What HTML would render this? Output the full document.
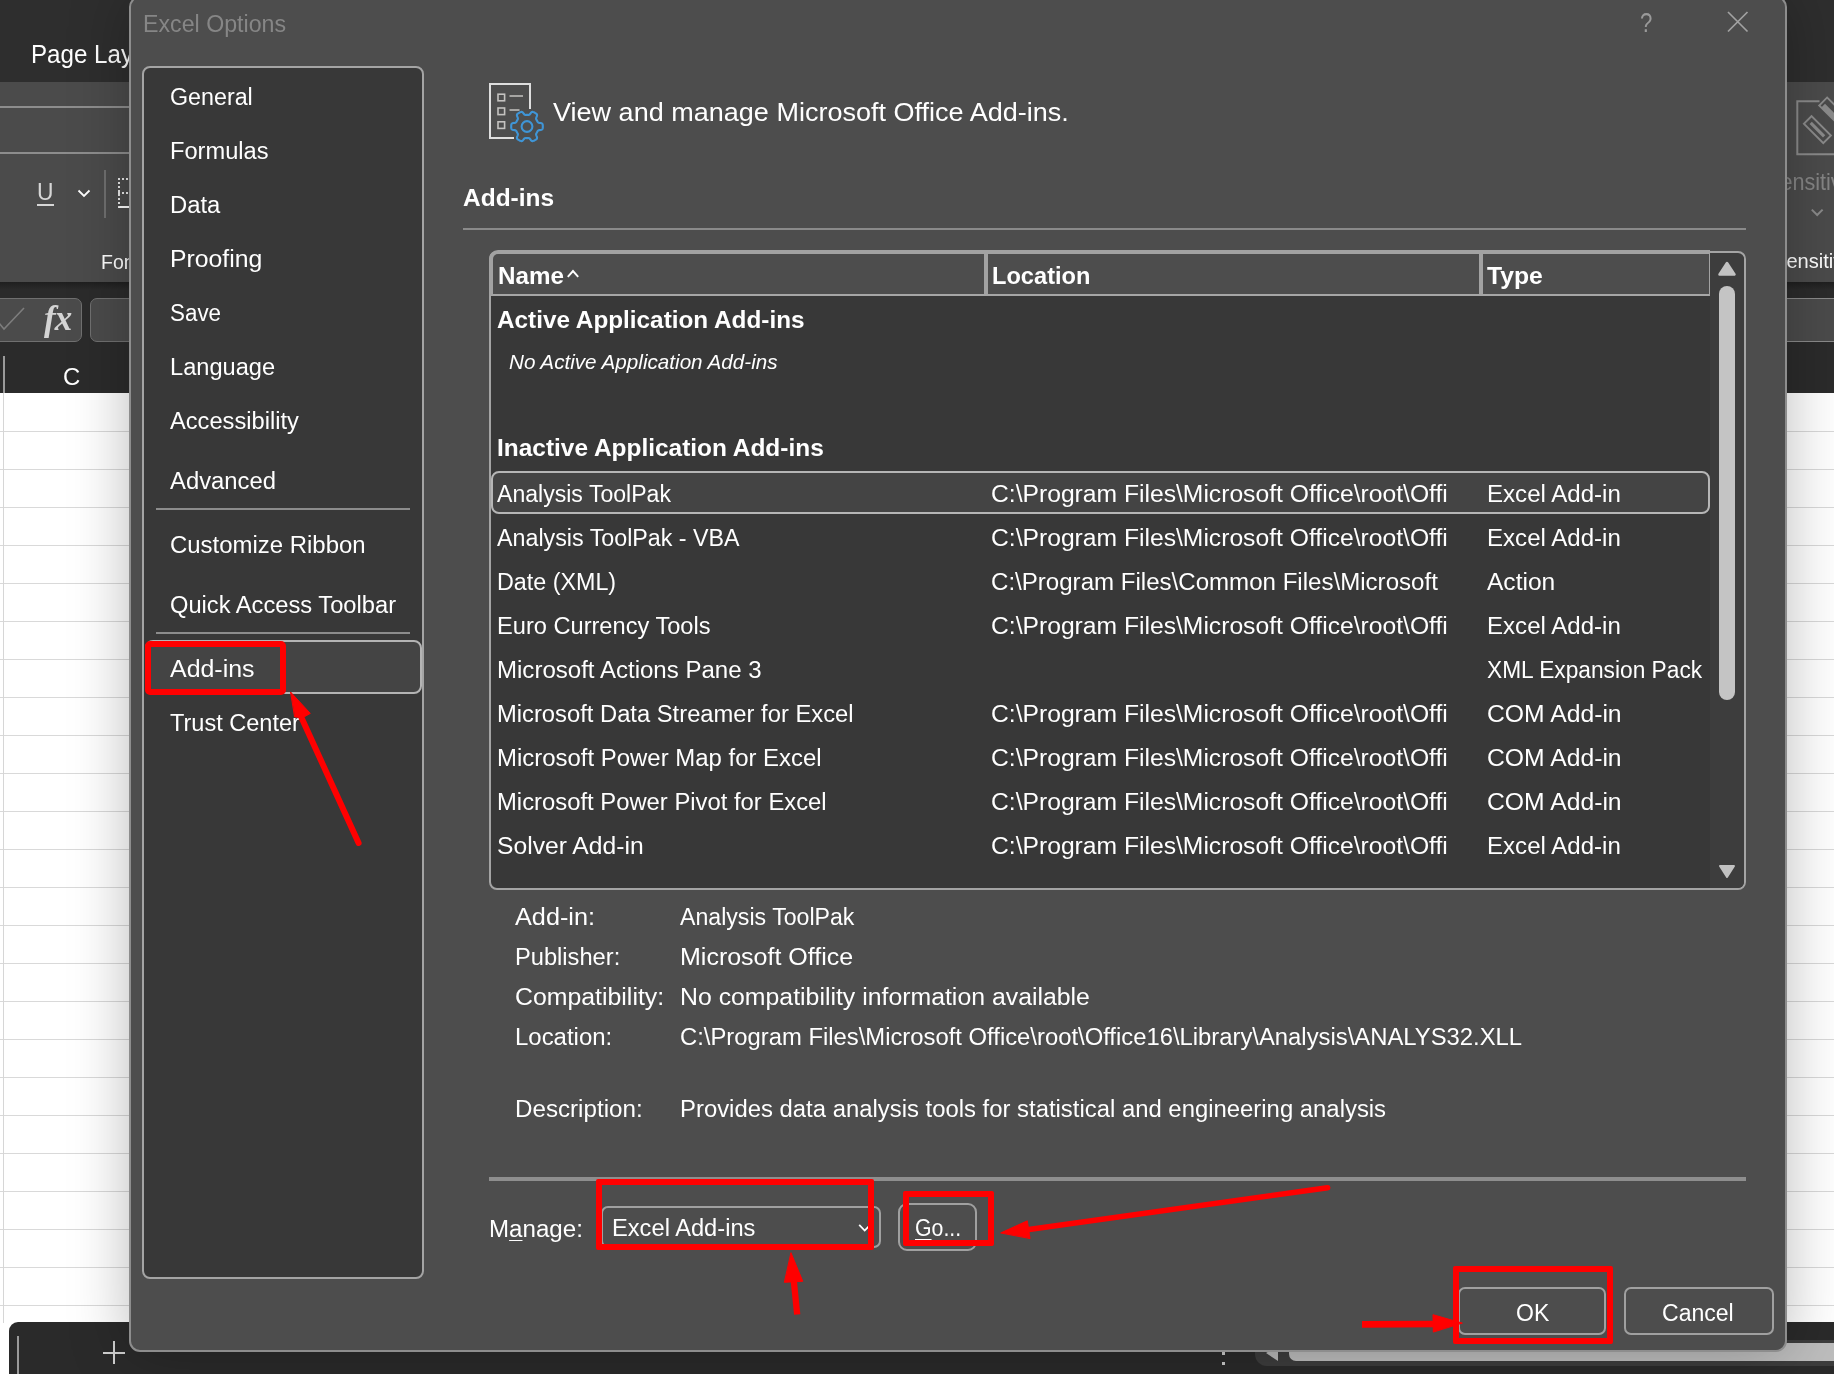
<!DOCTYPE html>
<html><head><meta charset="utf-8"><title>Excel Options</title>
<style>
html,body{margin:0;padding:0}
body{width:1834px;height:1374px;overflow:hidden;position:relative;background:#fff;font-family:"Liberation Sans",sans-serif}
div,svg{position:absolute;box-sizing:border-box}
.t{white-space:nowrap;transform-origin:0 50%}
.t u{text-decoration-thickness:1.4px;text-underline-offset:3.2px}
#bg,#dlgwrap{left:0;top:0;width:1834px;height:1374px;overflow:hidden}
#bg,#dlgwrap{will-change:transform}
.btn{border:2px solid #a0a0a0;border-radius:7px;background:#4d4d4d}
.red{border:6px solid #f00;border-radius:2px}
</style></head><body>
<!-- ================= Excel background ================= -->
<div id="bg">
  <div style="left:0;top:0;width:1834px;height:82px;background:#2e2e2e"></div>
  <div style="left:0;top:82px;width:1834px;height:200px;background:#4b4b4b"></div>
  <div style="left:0;top:106px;width:140px;height:2px;background:#8d8d8d"></div>
  <div style="left:0;top:152px;width:140px;height:2px;background:#8d8d8d"></div>
  <div style="left:0;top:282px;width:1834px;height:111px;background:#2b2b2b"></div>
  <div style="left:0;top:282px;width:1834px;height:8px;background:linear-gradient(#1f1f1f,#2b2b2b)"></div>
  <!-- left ribbon bits -->
  <div style="left:37px;top:204px;width:17px;height:2px;background:#d6d6d6"></div>
  <div class="t" style="left:36.5px;top:179.5px;font:24px/1 'Liberation Sans',sans-serif;color:#d6d6d6;transform:scaleX(.95)">U</div>
  <svg style="left:76px;top:186px" width="16" height="14" viewBox="0 0 16 14"><path d="M2.5 4.5 L8 10 L13.5 4.5" fill="none" stroke="#fff" stroke-width="1.8"/></svg>
  <div style="left:104px;top:170px;width:2px;height:48px;background:#707070"></div>
  <div style="left:118px;top:178px;width:30px;height:30px;border:2px dotted #e8e8e8;border-bottom:2px solid #fff"></div>
  <div style="left:118px;top:192px;width:30px;height:2px;border-top:2px dotted #e8e8e8"></div>
  <!-- formula bar left -->
  <div style="left:-20px;top:298px;width:102px;height:44px;background:#4b4b4b;border:1px solid #707070;border-radius:7px"></div>
  <div style="left:90px;top:298px;width:80px;height:44px;background:#4b4b4b;border:1px solid #707070;border-radius:7px"></div>
  <svg style="left:0;top:304px" width="30" height="30" viewBox="0 0 30 30"><path d="M-2 18 L4 25 L24 4" fill="none" stroke="#7d7d7d" stroke-width="1.6"/></svg>
  <div class="t" style="left:44px;top:300.500px;font:italic 700 35px/1 'Liberation Serif',serif;color:#d4d4d4;letter-spacing:-1px">fx</div>
  <!-- formula bar right -->
  <div style="left:1780px;top:298px;width:60px;height:44px;background:#4b4b4b;border-top:1px solid #8a8a8a;border-bottom:1px solid #8a8a8a"></div>
  <!-- column header separator -->
  <div style="left:3px;top:356px;width:1.5px;height:37px;background:#9a9a9a"></div>
  <!-- sheet -->
  <div style="left:0;top:393px;width:1834px;height:930px;background:#fff"></div>
  <div style="left:0;top:394px;width:1834px;height:929px;background:repeating-linear-gradient(to bottom,transparent 0,transparent 37px,#d9d9d9 37px,#d9d9d9 38px)"></div>
  <div style="left:3px;top:393px;width:1px;height:930px;background:#d6d6d6"></div>
  <!-- bottom bar -->
  <div style="left:9px;top:1322px;width:1900px;height:60px;background:#2a2a2a;border-top-left-radius:9px"></div>
  <div style="left:17px;top:1336px;width:2px;height:40px;background:#9a9a9a"></div>
  <div style="left:103px;top:1351.5px;width:22px;height:2px;background:#d0d0d0"></div>
  <div style="left:113px;top:1341px;width:2px;height:23px;background:#d0d0d0"></div>
  <div style="left:1221.5px;top:1352px;width:3px;height:3px;background:#c8c8c8"></div>
  <div style="left:1221.5px;top:1362px;width:3px;height:3px;background:#c8c8c8"></div>
  <div style="left:1255px;top:1340px;width:600px;height:26px;background:#3d3d3d;border-top-left-radius:12px;border-bottom-left-radius:12px"></div>
  <svg style="left:1262px;top:1344px" width="18" height="18" viewBox="0 0 18 18"><path d="M16 2 L4 9 L16 17 Z" fill="#b9b9b9"/></svg>
  <div style="left:1289px;top:1343px;width:600px;height:18px;background:#bdbdbd;border-radius:7px"></div>
  <!-- right ribbon: sensitivity icon -->
  <svg style="left:1786px;top:90px" width="48" height="135" viewBox="1786 90 48 135">
    <path d="M1819.5 101.3 H1797.3 V154.3 H1840" fill="none" stroke="#8b8b8b" stroke-width="2"/>
    <g transform="translate(1817.4,129.6) rotate(45)"><rect x="-13.7" y="-5.400" width="27.4" height="10.800" fill="none" stroke="#8b8b8b" stroke-width="1.9"/><rect x="-9.5" y="-1.6" width="19" height="3.2" fill="#8b8b8b"/></g>
    <g transform="translate(1819.2,105.4) rotate(45)"><rect x="0" y="-11.2" width="40" height="11.200" fill="#4b4b4b" stroke="#8b8b8b" stroke-width="1.9"/><rect x="3" y="-5.200" width="37" height="5.200" fill="#8b8b8b"/></g>
    <path d="M1811.8 209.6 L1817.2 215 L1822.6 209.6" fill="none" stroke="#8a8a8a" stroke-width="2"/>
  </svg>
<div class="t" style="left:31.4px;top:42.1px;font:normal 400 25px/1 'Liberation Sans', sans-serif;color:#fff;transform:scaleX(0.9650)">Page Layout</div>
<div class="t" style="left:101.3px;top:251.0px;font:normal 400 21px/1 'Liberation Sans', sans-serif;color:#fff;transform:scaleX(0.9300)">Font</div>
<div class="t" style="left:63.2px;top:365.3px;font:normal 400 24px/1 'Liberation Sans', sans-serif;color:#fff;transform:scaleX(0.9963)">C</div>
<div class="t" style="left:1766.0px;top:170.1px;font:normal 400 24px/1 'Liberation Sans', sans-serif;color:#858585;transform:scaleX(0.9000)">Sensitivity</div>
<div class="t" style="left:1772.7px;top:251.1px;font:normal 400 20.5px/1 'Liberation Sans', sans-serif;color:#fff;transform:scaleX(0.9800)">Sensitivity</div>
</div>
<!-- ================= Dialog ================= -->
<div id="dlgwrap">
  <div id="dlg" style="left:129px;top:-4px;width:1657.5px;height:1355.5px;background:#4d4d4d;border:2px solid #8d8d8d;border-radius:11px;box-shadow:0 0 60px 0 rgba(0,0,0,.27)"></div>
  <!-- title buttons -->
  <div class="t" style="left:1639.5px;top:8.300px;font:28.5px/1 'Liberation Sans',sans-serif;color:#9a9a9a;transform:scaleX(.78)">?</div>
  <svg style="left:1725px;top:9px" width="26" height="26" viewBox="0 0 26 26"><path d="M3 3 L22.5 22.5 M22.5 3 L3 22.5" fill="none" stroke="#a2a2a2" stroke-width="1.7"/></svg>
  <!-- sidebar -->
  <div style="left:142.3px;top:66px;width:281.7px;height:1213px;background:#383838;border:2px solid #a4a4a4;border-radius:8px"></div>
  <div style="left:156px;top:508px;width:254px;height:1.5px;background:#8c8c8c"></div>
  <div style="left:156px;top:632px;width:254px;height:1.5px;background:#8c8c8c"></div>
  <div style="left:145.3px;top:640.3px;width:276.5px;height:53.4px;background:#444;border:2px solid #b4b4b4;border-radius:8px"></div>
  <!-- heading icon -->
  <svg style="left:480px;top:75px" width="72" height="72" viewBox="480 75 72 72">
    <path d="M530 109 V84 H490 V138 H514" fill="none" stroke="#dedede" stroke-width="2"/>
    <g fill="none" stroke="#c4c2c0" stroke-width="1.6"><rect x="498" y="94.2" width="6.6" height="6.6"/><rect x="498" y="108" width="6.6" height="6.6"/><rect x="498" y="121.8" width="6.6" height="6.6"/></g>
    <path d="M509.5 96 H523 M509.5 110 H519.5" stroke="#c4c2c0" stroke-width="1.6"/>
    <g id="gear"><path d="M542.8 126.5 L542.8 127.1 L542.8 127.6 L542.7 128.2 L542.6 128.7 L542.3 129.2 L541.8 129.6 L540.8 130.0 L539.6 130.1 L538.7 130.3 L538.1 130.6 L537.8 130.9 L537.6 131.2 L537.4 131.6 L537.2 131.9 L537.0 132.3 L536.8 132.6 L536.6 133.0 L536.4 133.3 L536.2 133.7 L536.1 134.1 L536.1 134.7 L536.4 135.6 L536.9 136.8 L537.1 137.7 L537.0 138.4 L536.7 138.9 L536.3 139.3 L535.8 139.6 L535.4 139.9 L534.9 140.2 L534.4 140.5 L533.9 140.7 L533.4 140.9 L532.9 141.1 L532.3 141.1 L531.7 140.9 L530.9 140.2 L530.2 139.2 L529.6 138.5 L529.1 138.2 L528.6 138.1 L528.2 138.0 L527.8 138.1 L527.4 138.1 L527.0 138.1 L526.6 138.1 L526.2 138.1 L525.8 138.0 L525.4 138.1 L524.9 138.2 L524.4 138.5 L523.8 139.2 L523.1 140.2 L522.3 140.9 L521.7 141.1 L521.1 141.1 L520.6 140.9 L520.1 140.7 L519.6 140.5 L519.1 140.2 L518.6 139.9 L518.2 139.6 L517.7 139.3 L517.3 138.9 L517.0 138.4 L516.9 137.7 L517.1 136.8 L517.6 135.6 L517.9 134.7 L517.9 134.1 L517.8 133.7 L517.6 133.3 L517.4 133.0 L517.2 132.6 L517.0 132.3 L516.8 131.9 L516.6 131.6 L516.4 131.2 L516.2 130.9 L515.9 130.6 L515.3 130.3 L514.4 130.1 L513.2 130.0 L512.2 129.6 L511.7 129.2 L511.4 128.7 L511.3 128.2 L511.2 127.6 L511.2 127.1 L511.2 126.5 L511.2 125.9 L511.2 125.4 L511.3 124.8 L511.4 124.3 L511.7 123.8 L512.2 123.4 L513.2 123.0 L514.4 122.9 L515.3 122.7 L515.9 122.4 L516.2 122.1 L516.4 121.8 L516.6 121.4 L516.8 121.1 L517.0 120.7 L517.2 120.4 L517.4 120.0 L517.6 119.7 L517.8 119.3 L517.9 118.9 L517.9 118.3 L517.6 117.4 L517.1 116.2 L516.9 115.3 L517.0 114.6 L517.3 114.1 L517.7 113.7 L518.2 113.4 L518.6 113.1 L519.1 112.8 L519.6 112.5 L520.1 112.3 L520.6 112.1 L521.1 111.9 L521.7 111.9 L522.3 112.1 L523.1 112.8 L523.8 113.8 L524.4 114.5 L524.9 114.8 L525.4 114.9 L525.8 115.0 L526.2 114.9 L526.6 114.9 L527.0 114.9 L527.4 114.9 L527.8 114.9 L528.2 115.0 L528.6 114.9 L529.1 114.8 L529.6 114.5 L530.2 113.8 L530.9 112.8 L531.7 112.1 L532.3 111.9 L532.9 111.9 L533.4 112.1 L533.9 112.3 L534.4 112.5 L534.9 112.8 L535.4 113.1 L535.8 113.4 L536.3 113.7 L536.7 114.1 L537.0 114.6 L537.1 115.3 L536.9 116.2 L536.4 117.4 L536.1 118.3 L536.1 118.9 L536.2 119.3 L536.4 119.7 L536.6 120.0 L536.8 120.4 L537.0 120.7 L537.2 121.1 L537.4 121.4 L537.6 121.8 L537.8 122.1 L538.1 122.4 L538.7 122.7 L539.6 122.9 L540.8 123.0 L541.8 123.4 L542.3 123.8 L542.6 124.3 L542.7 124.8 L542.8 125.4 L542.8 125.9 Z" fill="#4d4d4d" stroke="#3f95d6" stroke-width="2.1" stroke-linejoin="round"/><circle cx="527" cy="126.5" r="5.4" fill="none" stroke="#3f95d6" stroke-width="2.1"/></g>
  </svg>
  <!-- section divider -->
  <div style="left:463px;top:228px;width:1283px;height:2px;background:#8a8a8a"></div>
  <!-- listbox -->
  <div style="left:489px;top:250.5px;width:1257px;height:639.5px;background:#383838;border:2px solid #a4a4a4;border-top-width:3px;border-radius:8px"></div>
  <div style="left:489px;top:250px;width:1221px;height:46px;background:#4d4d4d;border-top:4px solid #a2a2a2;border-bottom:2px solid #a6a6a6;border-left:4px solid #a2a2a2;border-right:1.5px solid #a2a2a2;border-top-left-radius:9px"></div>
  <div style="left:984px;top:253px;width:4px;height:41px;background:#a2a2a2"></div>
  <div style="left:1478.5px;top:253px;width:4px;height:41px;background:#a2a2a2"></div>
  <svg style="left:564.2px;top:267px" width="18" height="12" viewBox="0 0 18 12"><path d="M3.8 9.8 L9 4 L14.2 9.8" fill="none" stroke="#fff" stroke-width="1.9"/></svg>
  <!-- scrollbar -->
  <div style="left:1710px;top:253px;width:34px;height:635px;background:#3d3d3d;border-top-right-radius:6px;border-bottom-right-radius:6px"></div>
  <svg style="left:1716px;top:260px" width="22" height="18" viewBox="0 0 22 18"><path d="M11 3 L18.5 14.5 L3.5 14.5 Z" fill="#c2c2c2" stroke="#c2c2c2" stroke-width="2.5" stroke-linejoin="round"/></svg>
  <div style="left:1719px;top:286px;width:16px;height:414px;background:#c4c4c4;border-radius:8px"></div>
  <svg style="left:1716px;top:862px" width="22" height="18" viewBox="0 0 22 18"><path d="M11 15 L18 4 L4 4 Z" fill="#c2c2c2" stroke="#c2c2c2" stroke-width="2" stroke-linejoin="round"/></svg>
  <!-- selected row -->
  <div style="left:490.5px;top:470.5px;width:1219.5px;height:43.5px;background:#444;border:2px solid #b6b6b6;border-radius:8px"></div>
  <!-- separator above manage -->
  <div style="left:489px;top:1177px;width:1257px;height:4px;background:#8e8e8e"></div>
  <!-- combo -->
  <div class="btn" style="left:601px;top:1205.5px;width:279.5px;height:42.5px"></div>
  <svg style="left:855.5px;top:1220.5px" width="18" height="14" viewBox="0 0 18 14"><path d="M3.2 3.8 L8.7 9.5 L14.2 3.8" fill="none" stroke="#fff" stroke-width="1.8"/></svg>
  <div class="btn" style="left:897.5px;top:1203px;width:79.5px;height:47.5px;border-radius:9px"></div>
  <div class="btn" style="left:1458px;top:1287px;width:148px;height:48px"></div>
  <div class="btn" style="left:1624px;top:1287px;width:150px;height:48px"></div>
<div class="t" style="left:143.4px;top:12.6px;font:normal 400 23.5px/1 'Liberation Sans', sans-serif;color:#868686;transform:scaleX(0.9865)">Excel Options</div>
<div class="t" style="left:169.6px;top:85.5px;font:normal 400 23.5px/1 'Liberation Sans', sans-serif;color:#fff;transform:scaleX(0.9895)">General</div>
<div class="t" style="left:169.6px;top:139.5px;font:normal 400 23.5px/1 'Liberation Sans', sans-serif;color:#fff;transform:scaleX(1.0061)">Formulas</div>
<div class="t" style="left:169.6px;top:193.5px;font:normal 400 23.5px/1 'Liberation Sans', sans-serif;color:#fff;transform:scaleX(1.0139)">Data</div>
<div class="t" style="left:169.6px;top:247.5px;font:normal 400 23.5px/1 'Liberation Sans', sans-serif;color:#fff;transform:scaleX(1.0549)">Proofing</div>
<div class="t" style="left:169.6px;top:301.5px;font:normal 400 23.5px/1 'Liberation Sans', sans-serif;color:#fff;transform:scaleX(0.9525)">Save</div>
<div class="t" style="left:169.6px;top:355.5px;font:normal 400 23.5px/1 'Liberation Sans', sans-serif;color:#fff;transform:scaleX(1.0045)">Language</div>
<div class="t" style="left:169.6px;top:409.5px;font:normal 400 23.5px/1 'Liberation Sans', sans-serif;color:#fff;transform:scaleX(1.0066)">Accessibility</div>
<div class="t" style="left:169.6px;top:469.5px;font:normal 400 23.5px/1 'Liberation Sans', sans-serif;color:#fff;transform:scaleX(1.0134)">Advanced</div>
<div class="t" style="left:169.6px;top:533.5px;font:normal 400 23.5px/1 'Liberation Sans', sans-serif;color:#fff;transform:scaleX(1.0188)">Customize Ribbon</div>
<div class="t" style="left:169.6px;top:593.5px;font:normal 400 23.5px/1 'Liberation Sans', sans-serif;color:#fff;transform:scaleX(1.0080)">Quick Access Toolbar</div>
<div class="t" style="left:169.6px;top:657.5px;font:normal 400 23.5px/1 'Liberation Sans', sans-serif;color:#fff;transform:scaleX(1.0608)">Add-ins</div>
<div class="t" style="left:169.6px;top:711.5px;font:normal 400 23.5px/1 'Liberation Sans', sans-serif;color:#fff;transform:scaleX(1.0015)">Trust Center</div>
<div class="t" style="left:552.5px;top:99.4px;font:normal 400 26.5px/1 'Liberation Sans', sans-serif;color:#fff;transform:scaleX(1.0199)">View and manage Microsoft Office Add-ins.</div>
<div class="t" style="left:462.9px;top:186.7px;font:normal 700 23.5px/1 'Liberation Sans', sans-serif;color:#fff;transform:scaleX(1.0419)">Add-ins</div>
<div class="t" style="left:497.5px;top:265.1px;font:normal 700 23.5px/1 'Liberation Sans', sans-serif;color:#fff;transform:scaleX(1.0299)">Name</div>
<div class="t" style="left:991.9px;top:265.1px;font:normal 700 23.5px/1 'Liberation Sans', sans-serif;color:#fff;transform:scaleX(1.0052)">Location</div>
<div class="t" style="left:1486.6px;top:265.1px;font:normal 700 23.5px/1 'Liberation Sans', sans-serif;color:#fff;transform:scaleX(1.0513)">Type</div>
<div class="t" style="left:497.2px;top:308.6px;font:normal 700 23.5px/1 'Liberation Sans', sans-serif;color:#fff;transform:scaleX(1.0346)">Active Application Add-ins</div>
<div class="t" style="left:508.7px;top:350.6px;font:italic 400 21px/1 'Liberation Sans', sans-serif;color:#fff;transform:scaleX(0.9834)">No Active Application Add-ins</div>
<div class="t" style="left:496.8px;top:437.4px;font:normal 700 23.5px/1 'Liberation Sans', sans-serif;color:#fff;transform:scaleX(1.0398)">Inactive Application Add-ins</div>
<div class="t" style="left:496.8px;top:483.0px;font:normal 400 23.5px/1 'Liberation Sans', sans-serif;color:#fff;transform:scaleX(0.9815)">Analysis ToolPak</div>
<div class="t" style="left:991.2px;top:483.0px;font:normal 400 23.5px/1 'Liberation Sans', sans-serif;color:#fff;transform:scaleX(1.0494)">C:\Program Files\Microsoft Office\root\Offi</div>
<div class="t" style="left:1486.6px;top:483.0px;font:normal 400 23.5px/1 'Liberation Sans', sans-serif;color:#fff;transform:scaleX(1.0244)">Excel Add-in</div>
<div class="t" style="left:496.8px;top:527.0px;font:normal 400 23.5px/1 'Liberation Sans', sans-serif;color:#fff;transform:scaleX(0.9898)">Analysis ToolPak - VBA</div>
<div class="t" style="left:991.2px;top:527.0px;font:normal 400 23.5px/1 'Liberation Sans', sans-serif;color:#fff;transform:scaleX(1.0494)">C:\Program Files\Microsoft Office\root\Offi</div>
<div class="t" style="left:1486.6px;top:527.0px;font:normal 400 23.5px/1 'Liberation Sans', sans-serif;color:#fff;transform:scaleX(1.0244)">Excel Add-in</div>
<div class="t" style="left:496.8px;top:571.0px;font:normal 400 23.5px/1 'Liberation Sans', sans-serif;color:#fff;transform:scaleX(0.9916)">Date (XML)</div>
<div class="t" style="left:991.2px;top:571.0px;font:normal 400 23.5px/1 'Liberation Sans', sans-serif;color:#fff;transform:scaleX(1.0245)">C:\Program Files\Common Files\Microsoft</div>
<div class="t" style="left:1486.6px;top:571.0px;font:normal 400 23.5px/1 'Liberation Sans', sans-serif;color:#fff;transform:scaleX(1.0445)">Action</div>
<div class="t" style="left:496.8px;top:615.0px;font:normal 400 23.5px/1 'Liberation Sans', sans-serif;color:#fff;transform:scaleX(1.0050)">Euro Currency Tools</div>
<div class="t" style="left:991.2px;top:615.0px;font:normal 400 23.5px/1 'Liberation Sans', sans-serif;color:#fff;transform:scaleX(1.0494)">C:\Program Files\Microsoft Office\root\Offi</div>
<div class="t" style="left:1486.6px;top:615.0px;font:normal 400 23.5px/1 'Liberation Sans', sans-serif;color:#fff;transform:scaleX(1.0244)">Excel Add-in</div>
<div class="t" style="left:496.8px;top:659.0px;font:normal 400 23.5px/1 'Liberation Sans', sans-serif;color:#fff;transform:scaleX(1.0232)">Microsoft Actions Pane 3</div>
<div class="t" style="left:1486.6px;top:659.0px;font:normal 400 23.5px/1 'Liberation Sans', sans-serif;color:#fff;transform:scaleX(0.9669)">XML Expansion Pack</div>
<div class="t" style="left:496.8px;top:703.0px;font:normal 400 23.5px/1 'Liberation Sans', sans-serif;color:#fff;transform:scaleX(1.0111)">Microsoft Data Streamer for Excel</div>
<div class="t" style="left:991.2px;top:703.0px;font:normal 400 23.5px/1 'Liberation Sans', sans-serif;color:#fff;transform:scaleX(1.0494)">C:\Program Files\Microsoft Office\root\Offi</div>
<div class="t" style="left:1486.6px;top:703.0px;font:normal 400 23.5px/1 'Liberation Sans', sans-serif;color:#fff;transform:scaleX(1.0518)">COM Add-in</div>
<div class="t" style="left:496.8px;top:747.0px;font:normal 400 23.5px/1 'Liberation Sans', sans-serif;color:#fff;transform:scaleX(1.0188)">Microsoft Power Map for Excel</div>
<div class="t" style="left:991.2px;top:747.0px;font:normal 400 23.5px/1 'Liberation Sans', sans-serif;color:#fff;transform:scaleX(1.0494)">C:\Program Files\Microsoft Office\root\Offi</div>
<div class="t" style="left:1486.6px;top:747.0px;font:normal 400 23.5px/1 'Liberation Sans', sans-serif;color:#fff;transform:scaleX(1.0518)">COM Add-in</div>
<div class="t" style="left:496.8px;top:791.0px;font:normal 400 23.5px/1 'Liberation Sans', sans-serif;color:#fff;transform:scaleX(1.0137)">Microsoft Power Pivot for Excel</div>
<div class="t" style="left:991.2px;top:791.0px;font:normal 400 23.5px/1 'Liberation Sans', sans-serif;color:#fff;transform:scaleX(1.0494)">C:\Program Files\Microsoft Office\root\Offi</div>
<div class="t" style="left:1486.6px;top:791.0px;font:normal 400 23.5px/1 'Liberation Sans', sans-serif;color:#fff;transform:scaleX(1.0518)">COM Add-in</div>
<div class="t" style="left:496.8px;top:835.0px;font:normal 400 23.5px/1 'Liberation Sans', sans-serif;color:#fff;transform:scaleX(1.0490)">Solver Add-in</div>
<div class="t" style="left:991.2px;top:835.0px;font:normal 400 23.5px/1 'Liberation Sans', sans-serif;color:#fff;transform:scaleX(1.0494)">C:\Program Files\Microsoft Office\root\Offi</div>
<div class="t" style="left:1486.6px;top:835.0px;font:normal 400 23.5px/1 'Liberation Sans', sans-serif;color:#fff;transform:scaleX(1.0244)">Excel Add-in</div>
<div class="t" style="left:514.8px;top:905.9px;font:normal 400 23.5px/1 'Liberation Sans', sans-serif;color:#fff;transform:scaleX(1.0747)">Add-in:</div>
<div class="t" style="left:680.4px;top:905.9px;font:normal 400 23.5px/1 'Liberation Sans', sans-serif;color:#fff;transform:scaleX(0.9843)">Analysis ToolPak</div>
<div class="t" style="left:514.8px;top:945.9px;font:normal 400 23.5px/1 'Liberation Sans', sans-serif;color:#fff;transform:scaleX(1.0070)">Publisher:</div>
<div class="t" style="left:680.4px;top:945.9px;font:normal 400 23.5px/1 'Liberation Sans', sans-serif;color:#fff;transform:scaleX(1.0640)">Microsoft Office</div>
<div class="t" style="left:514.8px;top:985.9px;font:normal 400 23.5px/1 'Liberation Sans', sans-serif;color:#fff;transform:scaleX(1.0573)">Compatibility:</div>
<div class="t" style="left:680.4px;top:985.9px;font:normal 400 23.5px/1 'Liberation Sans', sans-serif;color:#fff;transform:scaleX(1.0567)">No compatibility information available</div>
<div class="t" style="left:514.8px;top:1025.9px;font:normal 400 23.5px/1 'Liberation Sans', sans-serif;color:#fff;transform:scaleX(1.0193)">Location:</div>
<div class="t" style="left:680.4px;top:1025.9px;font:normal 400 23.5px/1 'Liberation Sans', sans-serif;color:#fff;transform:scaleX(1.0137)">C:\Program Files\Microsoft Office\root\Office16\Library\Analysis\ANALYS32.XLL</div>
<div class="t" style="left:514.8px;top:1097.7px;font:normal 400 23.5px/1 'Liberation Sans', sans-serif;color:#fff;transform:scaleX(1.0286)">Description:</div>
<div class="t" style="left:680.4px;top:1097.7px;font:normal 400 23.5px/1 'Liberation Sans', sans-serif;color:#fff;transform:scaleX(1.0160)">Provides data analysis tools for statistical and engineering analysis</div>
<div class="t" style="left:488.8px;top:1217.8px;font:normal 400 23.5px/1 'Liberation Sans', sans-serif;color:#fff;transform:scaleX(1.0258)">M<u>a</u>nage:</div>
<div class="t" style="left:612.3px;top:1217.3px;font:normal 400 23.5px/1 'Liberation Sans', sans-serif;color:#fff;transform:scaleX(1.0073)">Excel Add-ins</div>
<div class="t" style="left:914.5px;top:1217.1px;font:normal 400 23.5px/1 'Liberation Sans', sans-serif;color:#fff;transform:scaleX(0.9054)"><u>G</u>o...</div>
<div class="t" style="left:1515.6px;top:1301.5px;font:normal 400 23.5px/1 'Liberation Sans', sans-serif;color:#fff;transform:scaleX(0.9783)">OK</div>
<div class="t" style="left:1662.4px;top:1301.5px;font:normal 400 23.5px/1 'Liberation Sans', sans-serif;color:#fff;transform:scaleX(0.9805)">Cancel</div>
  <!-- ============ red annotations ============ -->
  <div class="red" style="left:145.4px;top:641.3px;width:141px;height:54px;border-width:6.5px;border-radius:5px"></div>
  <div class="red" style="left:596px;top:1179px;width:278px;height:71px"></div>
  <div class="red" style="left:903px;top:1190.5px;width:90.5px;height:55px"></div>
  <div class="red" style="left:1452.5px;top:1265.5px;width:160px;height:78.5px"></div>
  <svg style="left:0;top:0" width="1834" height="1374" viewBox="0 0 1834 1374">
    <g fill="#f00" stroke="#f00" stroke-linecap="round" stroke-linejoin="round">
      <!-- arrow to Add-ins -->
      <path d="M358.6 843 L300.5 715.5" stroke-width="6" fill="none"/>
      <path d="M290.8 692.3 L310.3 713.4 L303 717.5 L295 717 Z" stroke-width="1"/>
      <!-- arrow to combo -->
      <path d="M797.2 1314.5 L793.8 1281" stroke-width="6.3" fill="none" stroke-linecap="butt"/>
      <path d="M791.1 1253 L802.8 1281.3 L784.7 1282.3 Z" stroke-width="1"/>
      <!-- arrow to Go -->
      <path d="M1327.6 1187.7 L1027 1229.7" stroke-width="5.6" fill="none"/>
      <path d="M1001 1232.8 L1027.3 1220.8 L1030 1238.2 Z" stroke-width="1"/>
      <!-- arrow to OK -->
      <path d="M1362 1324.4 L1434 1324" stroke-width="6.6" fill="none" stroke-linecap="butt"/>
      <path d="M1462 1323 L1433 1314.7 L1433.3 1331.700 Z" stroke-width="1"/>
    </g>
  </svg>
</div>
</body></html>
